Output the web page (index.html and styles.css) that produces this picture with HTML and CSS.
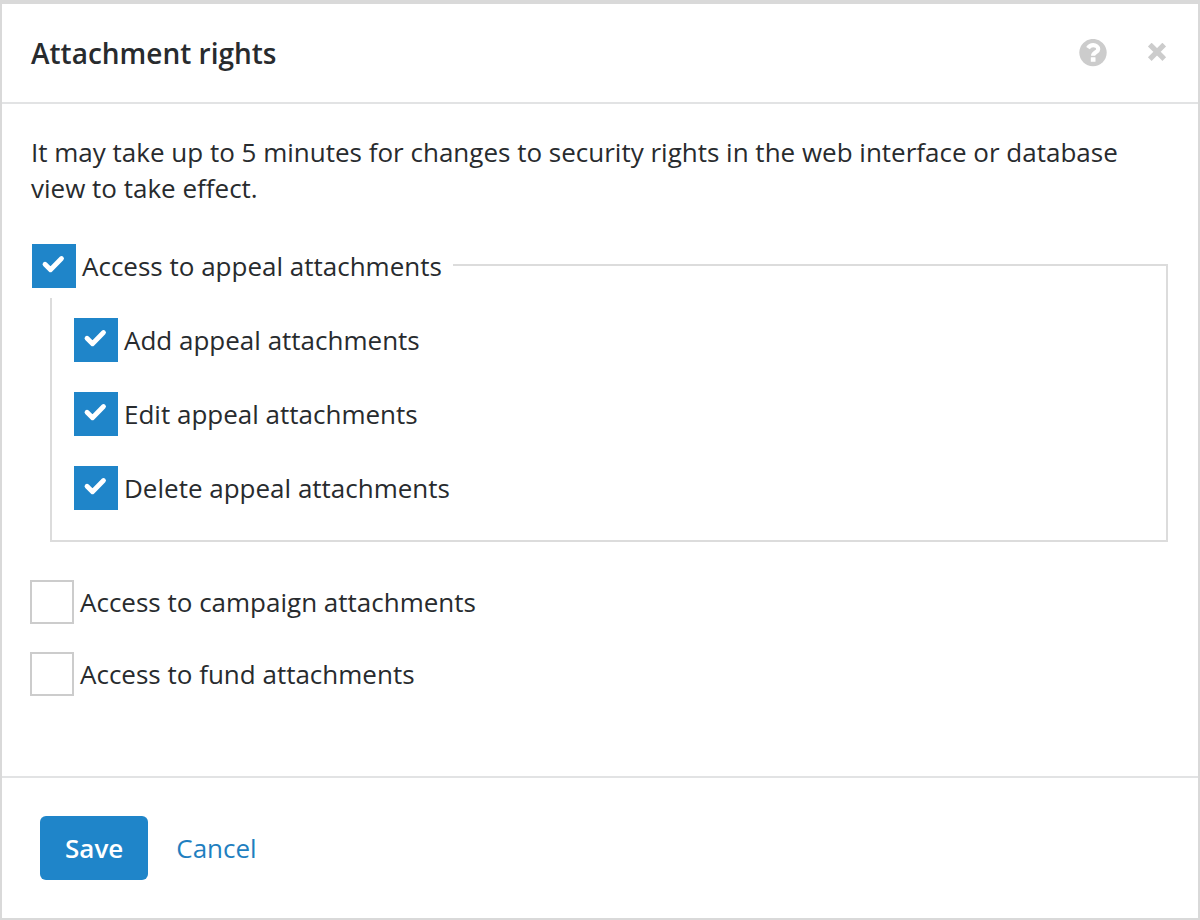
FILE: index.html
```html
<!DOCTYPE html>
<html lang="en">
<head>
<meta charset="utf-8">
<meta name="viewport" content="width=device-width, initial-scale=1">
<title>Attachment rights</title>
<link rel="stylesheet" href="styles.css">
</head>
<body>
<svg class="sprite" aria-hidden="true">
  <symbol id="tick" viewBox="0 0 44 44"><path d="M13 20.200 18.500 25.700 29.500 14.500" fill="none" stroke="#fff" stroke-width="4.800" stroke-linecap="round" stroke-linejoin="round"/></symbol>
</svg>
<form class="dialog" role="dialog" aria-labelledby="dialog-title">
  <header class="dialog-header">
    <h1 class="dialog-title" id="dialog-title">Attachment rights</h1>
    <div class="dialog-tools">
      <button class="icon-button" type="button" aria-label="Help">
        <svg width="28" height="28" viewBox="0 0 28 28" aria-hidden="true">
          <circle cx="14" cy="13.600" r="13.700" fill="#ccc"/>
          <path d="M9 9.200C10.200 7.200 11.900 6.200 14.200 6.200C17 6.200 19.200 7.900 19.200 10.200C19.200 13.300 14.100 13.300 14.100 16.800" fill="none" stroke="#fff" stroke-width="4.200"/>
          <rect x="11.800" y="18.200" width="4.700" height="4.600" rx=".4" fill="#fff"/>
        </svg>
      </button>
      <button class="icon-button" type="button" aria-label="Close">
        <svg width="20" height="20" viewBox="0 0 20 20" aria-hidden="true">
          <path d="M4.600 3.400 15.400 14.200M15.400 3.400 4.600 14.200" stroke="#ccc" stroke-width="5.200" stroke-linecap="square"/>
        </svg>
      </button>
    </div>
  </header>
  <main class="dialog-body">
    <p class="notice">It may take up to 5 minutes for changes to security rights in the web interface or database view to take effect.</p>
    <fieldset class="group">
      <legend class="group-legend">
        <label class="option"><span class="check"><input class="check-input" type="checkbox" checked><svg class="check-tick" aria-hidden="true"><use href="#tick"/></svg></span>Access to appeal attachments</label>
      </legend>
      <div class="group-options">
        <label class="option"><span class="check"><input class="check-input" type="checkbox" checked><svg class="check-tick" aria-hidden="true"><use href="#tick"/></svg></span>Add appeal attachments</label>
        <label class="option"><span class="check"><input class="check-input" type="checkbox" checked><svg class="check-tick" aria-hidden="true"><use href="#tick"/></svg></span>Edit appeal attachments</label>
        <label class="option"><span class="check"><input class="check-input" type="checkbox" checked><svg class="check-tick" aria-hidden="true"><use href="#tick"/></svg></span>Delete appeal attachments</label>
      </div>
    </fieldset>
    <div class="options">
      <label class="option"><span class="check"><input class="check-input" type="checkbox"><svg class="check-tick" aria-hidden="true"><use href="#tick"/></svg></span>Access to campaign attachments</label>
      <label class="option"><span class="check"><input class="check-input" type="checkbox"><svg class="check-tick" aria-hidden="true"><use href="#tick"/></svg></span>Access to fund attachments</label>
    </div>
  </main>
  <footer class="dialog-footer">
    <button class="save" type="button">Save</button>
    <a class="cancel" href="#">Cancel</a>
  </footer>
</form>
</body>
</html>
```
FILE: styles.css
```css
*, *::before, *::after { box-sizing: border-box; }

body {
  margin: 0;
  background: #fff;
  color: #282b2e;
  font: 26px/36px "Open Sans", "Noto Sans", sans-serif;
}

.sprite { display: none; }

.dialog {
  display: flex;
  flex-direction: column;
  min-height: 100vh;
  border: 2px solid #d9d9d9;
  border-top-width: 4px;
}

.dialog-header {
  display: flex;
  align-items: center;
  justify-content: space-between;
  padding: 30px 31px 30px 29px;
  border-bottom: 2px solid #e2e3e4;
}

.dialog-title {
  margin: 0;
  font-size: 28px;
  line-height: 38px;
  font-weight: 600;
}

.dialog-tools {
  display: flex;
  align-items: center;
  gap: 40px;
}

.icon-button {
  display: flex;
  padding: 0;
  border: 0;
  background: none;
  cursor: pointer;
}

.dialog-body {
  flex: 1;
  padding: 30px 30px 40px 28px;
}

.notice {
  margin: 0 0 26px;
  padding-left: 1px;
}

.group {
  min-width: 0;
  margin: 0 0 38px 20px;
  padding: 20px 22px 30px;
  border: 2px solid #dcdcdc;
}

.group-legend {
  margin-left: -42px;
  padding: 12px 11px 10px 0;
}

.group-options,
.options {
  display: flex;
  flex-direction: column;
  align-items: flex-start;
  gap: 30px;
}

.options { gap: 28px; }

.option {
  display: flex;
  align-items: center;
  gap: 6px;
  cursor: pointer;
}

.check {
  display: grid;
  flex: none;
  width: 44px;
  height: 44px;
}

.check-input,
.check-tick {
  grid-area: 1 / 1;
  width: 44px;
  height: 44px;
  margin: 0;
}

.check-input {
  appearance: none;
  border: 2px solid #ccc;
  background: #fff;
}

.check-input:checked {
  border-color: #1f85c9;
  background: #1f85c9;
}

.check-tick {
  visibility: hidden;
  pointer-events: none;
}

.check-input:checked + .check-tick { visibility: visible; }

.dialog-footer {
  display: flex;
  align-items: center;
  gap: 28px;
  padding: 38px;
  border-top: 2px solid #e2e3e4;
}

.save {
  padding: 14px 25px;
  border: 0;
  border-radius: 6px;
  background: #1f85c9;
  color: #fff;
  font: inherit;
  font-weight: 600;
  cursor: pointer;
}

.cancel {
  color: #1f7fc0;
  text-decoration: none;
}
```
